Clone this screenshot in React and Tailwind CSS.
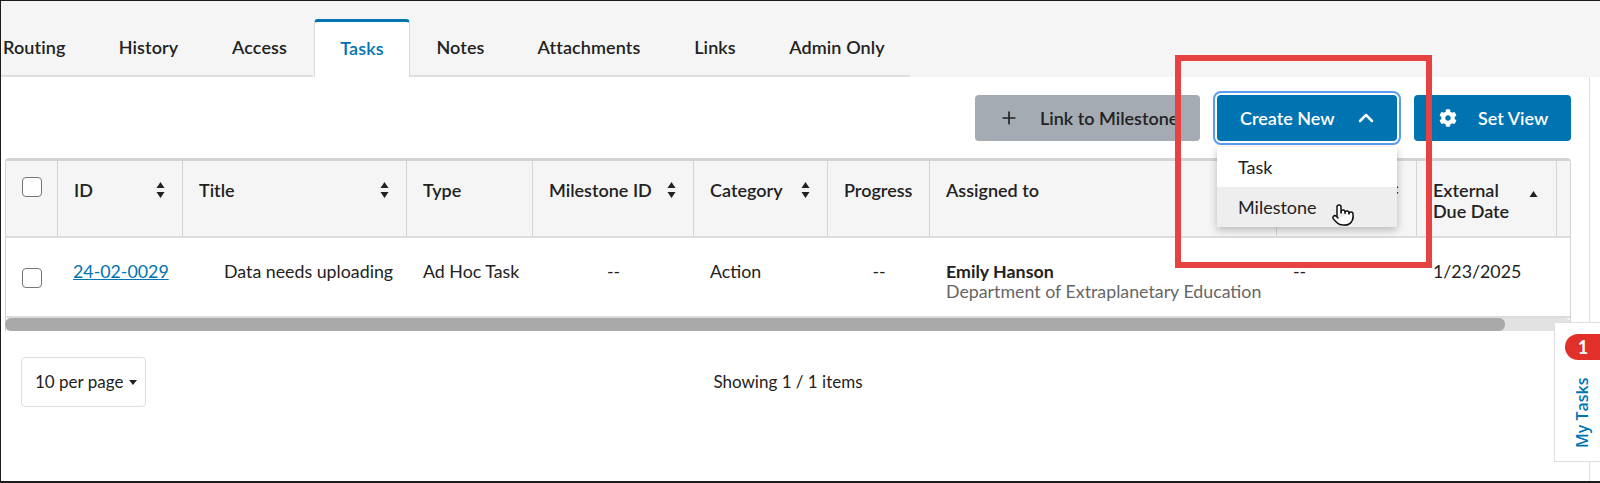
import React from 'react';
import { Plus, ChevronUp, Pointer } from 'lucide-react';
import { FaCog } from 'react-icons/fa';

const tabs = [
  { label: 'Routing', cls: 'w-[91px] pl-[3px]' },
  { label: 'History', cls: 'w-[113px] pl-[2px] justify-center' },
  { label: 'Access', cls: 'w-[109px] pl-[2px] justify-center' },
  { label: 'Tasks', cls: 'w-[96px] justify-center', active: true },
  { label: 'Notes', cls: 'w-[101px] pl-[2px] justify-center' },
  { label: 'Attachments', cls: 'w-[156px] pl-[2px] justify-center' },
  { label: 'Links', cls: 'w-[96px] pl-[2px] justify-center' },
  { label: 'Admin Only', cls: 'w-[148px] pl-[2px] justify-center' },
];

const colTemplate = 'grid-cols-[52px_125px_224px_126px_161px_134px_102px_347px_140px_140px_15px]';

function SortIcon() {
  return (
    <svg width="9" height="16" viewBox="0 0 9 16" className="shrink-0 text-[#222]">
      <path d="M4.5 0 L8.5 6 H0.5 Z M4.5 16 L8.5 10 H0.5 Z" fill="currentColor" />
    </svg>
  );
}

function Checkbox() {
  return <span className="block w-[20px] h-[20px] rounded-[4px] bg-white border border-[#767676]" />;
}

function HeadCell({ children, sort, className = '' }) {
  return (
    <div className={`flex items-start justify-between pt-[19px] pl-[16px] pr-[17px] border-r border-[#d4d4d4] leading-[21px] ${className}`}>
      <span>{children}</span>
      {sort && <span className="pt-[2px]"><SortIcon /></span>}
    </div>
  );
}

export default function App() {
  return (
    <div className="relative w-[1600px] h-[483px] overflow-hidden bg-white border-t border-l border-b-2 border-[#1c1c1c] text-[18px] text-[#222] font-['Lato',sans-serif]">
      {/* tabs */}
      <div className="flex h-[76px] pt-[18px] bg-[#f5f5f5]">
        {tabs.map((t) => (
          <div
            key={t.label}
            className={`flex items-center text-[18px] font-semibold tracking-[0.1px] ${t.cls} ${
              t.active
                ? 'pb-[2px] bg-white text-[#0073b1] rounded-t-[4px] border-t-[3px] border-x border-x-[#dcdcdc] border-t-[#0073b1]'
                : 'border-b-2 border-[#dedede] mr-[1px] -ml-[1px]'
            }`}
          >
            {t.label}
          </div>
        ))}
      </div>

      <div className="w-[1589px] h-[404px] bg-white border-r border-[#dedede]">
        {/* toolbar */}
        <div className="flex justify-end gap-[17px] pt-[18px] pr-[18px] h-[81px]">
          <button className="flex items-center h-[46px] w-[225px] pl-[24px] rounded-[4px] bg-[#a4abb3] text-[#222] font-semibold whitespace-nowrap">
            <Plus size={20} strokeWidth={2} />
            <span className="ml-[21px]">Link to Milestone</span>
          </button>
          <div className="relative">
            <button className="flex items-center h-[46px] w-[180px] pl-[23px] rounded-[4px] bg-[#0073b1] text-white font-semibold outline-2 outline-offset-2 outline-[#5a9cf0]">
              Create New
              <ChevronUp size={24} strokeWidth={2.5} className="ml-[19px]" />
            </button>
            <div className="absolute z-10 left-0 top-[52px] w-[180px] bg-white shadow-[0_3px_8px_rgba(0,0,0,0.25)]">
              <div className="h-[40px] pl-[21px] flex items-center">Task</div>
              <div className="h-[40px] pl-[21px] flex items-center bg-[#eeeeee]">Milestone</div>
              <Pointer size={24} strokeWidth={1.5} fill="white" className="absolute left-[114px] top-[56px] text-[#111]" />
            </div>
          </div>
          <button className="flex items-center h-[46px] w-[157px] pl-[25px] rounded-[4px] bg-[#0073b1] text-white font-semibold">
            <FaCog size={18} />
            <span className="ml-[21px]">Set View</span>
          </button>
        </div>

        {/* table */}
        <div className="ml-[4px] w-[1566px] border-t-[3px] border-x border-[#d4d4d4] rounded-t-[4px]">
          <div className={`grid ${colTemplate} h-[77px] bg-[#f5f5f5] border-b-2 border-[#dcdcdc] font-semibold`}>
            <div className="pt-[16px] pl-[16px] border-r border-[#d4d4d4]"><Checkbox /></div>
            <HeadCell sort>ID</HeadCell>
            <HeadCell sort>Title</HeadCell>
            <HeadCell>Type</HeadCell>
            <HeadCell sort>Milestone ID</HeadCell>
            <HeadCell sort>Category</HeadCell>
            <HeadCell>Progress</HeadCell>
            <HeadCell>Assigned to</HeadCell>
            <HeadCell sort />
            <div className="relative flex items-start pt-[19px] pl-[16px] pr-[17px] border-r border-[#d4d4d4] leading-[21px]">
              <span>External<br />Due Date</span>
              <svg width="9" height="6" viewBox="0 0 9 6" className="absolute right-[18px] top-[30px]">
                <path d="M4.5 0 L8.5 6 H0.5 Z" fill="#222" />
              </svg>
            </div>
            <div />
          </div>
          <div className={`grid ${colTemplate} h-[80px] border-b-2 border-[#dcdcdc] pt-[23px] leading-[20px] text-[17.8px]`}>
            <div className="pt-[7px] pl-[16px]"><Checkbox /></div>
            <div className="pl-[15px]"><a className="text-[#0073b1] underline">24-02-0029</a></div>
            <div className="pl-[41px] whitespace-nowrap">Data needs uploading</div>
            <div className="pl-[16px]">Ad Hoc Task</div>
            <div className="text-center">--</div>
            <div className="pl-[16px]">Action</div>
            <div className="text-center">--</div>
            <div className="pl-[16px]">
              <div className="font-bold">Emily Hanson</div>
              <div className="text-[#666] whitespace-nowrap">Department of Extraplanetary Education</div>
            </div>
            <div className="pl-[16px]">--</div>
            <div className="pl-[16px]">1/23/2025</div>
            <div />
          </div>
          {/* scrollbar */}
          <div className="h-[13px] bg-[#e2e2e2] rounded-[6px] -mx-[1px]">
            <div className="h-[13px] w-[1500px] bg-[#a9a9a9] rounded-[6px]" />
          </div>
        </div>

        {/* footer */}
        <div className="relative flex items-center justify-center h-[50px] mt-[26px] pr-[14px] text-[17px]">
          <div className="absolute left-[20px] top-0 flex items-center h-[50px] w-[125px] pl-[13px] gap-[6px] rounded-[4px] bg-white border border-[#dedede]">
            10 per page
            <svg width="8" height="5" viewBox="0 0 8 5"><path d="M0 0 H8 L4 5 Z" fill="#222" /></svg>
          </div>
          <span>Showing 1 / 1 items</span>
        </div>
      </div>

      {/* red annotation box */}
      <div className="absolute z-20 left-[1174px] top-[54px] w-[257px] h-[213px] border-[6px] border-[#e74242] pointer-events-none" />

      {/* my tasks side tab */}
      <div className="absolute z-20 left-[1553px] top-[321px] w-[47px] h-[140px] bg-white border border-[#dedede] border-r-0">
        <div className="absolute left-[10px] top-[11px] w-[36px] h-[26px] flex items-center justify-center rounded-l-[13px] bg-[#e1302a] text-white font-bold">1</div>
        <span className="absolute left-[35px] bottom-[13px] origin-bottom-left -rotate-90 whitespace-nowrap leading-none text-[#0073b1] font-semibold font-['Open_Sans',sans-serif] text-[16px]">My Tasks</span>
      </div>
    </div>
  );
}
